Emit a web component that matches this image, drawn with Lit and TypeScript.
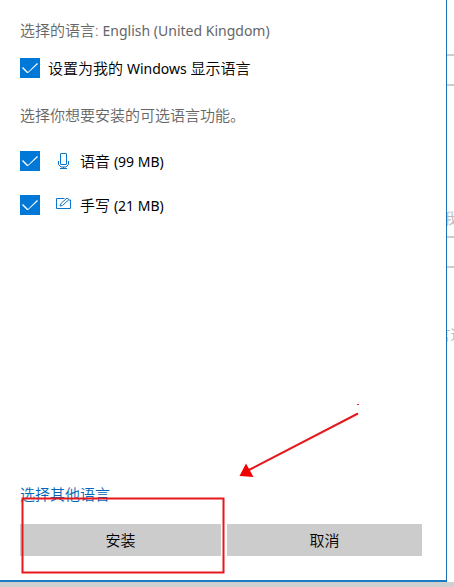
import { LitElement, html, css, svg } from "lit";
import { customElement } from "lit/decorators.js";

const micIcon = svg`
  <rect x="5.5" y="0.5" width="6" height="11" rx="0.5"></rect>
  <path d="M3.5 8v3.5l2.5 2.5h5l2.5-2.5V8M8.5 14v2M5 15.5h7"></path>`;

const penIcon = svg`
  <path d="M9.5 1.5H1.5v10h14V3h-1.5"></path>
  <path d="M5 9l1-2.5 6-5.5 2 1.5-6.5 6z"></path>`;

@customElement("check-row")
export class CheckRow extends LitElement {
  static styles = css`
    :host {
      display: block;
    }
    label {
      display: flex;
      align-items: center;
      height: 20px;
    }
    input {
      appearance: none;
      width: 20px;
      height: 20px;
      margin: 0 8px 0 0;
      background: #0078d7;
      display: grid;
      place-items: center;
    }
    input:checked::before {
      content: "";
      width: 16px;
      height: 10px;
      background: #fff;
      clip-path: polygon(0 5px, 1px 4px, 6px 9px, 15px 0, 16px 1px, 6px 10px, 5px 10px);
    }
  `;
  render() {
    return html`<label><input type="checkbox" checked /><slot></slot></label>`;
  }
}

@customElement("app-root")
export class AppRoot extends LitElement {
  static styles = css`
    :host {
      display: flex;
      flex-direction: column;
      min-height: 100vh;
      box-sizing: border-box;
      border-bottom: 5px solid #d0d0d0;
      background: #fff;
      color: #000;
      font: 350 15px/20px "Noto Sans", "Noto Sans CJK SC", sans-serif;
    }
    .page {
      flex: 1;
      display: flex;
    }
    .dialog {
      flex: 1;
      position: relative;
      display: flex;
      flex-direction: column;
      padding: 20px 24px 24px 20px;
      border-right: 1px solid #1a72b5;
      border-bottom: 2px solid #1a7cc4;
    }
    .latin {
      font-size: 14px;
      font-weight: 400;
      line-height: 1;
    }
    .note {
      margin: 0;
      color: #666;
    }
    .display {
      margin: 18px 0 27px;
    }
    .features {
      display: flex;
      flex-direction: column;
      gap: 24px;
      margin-top: 26px;
    }
    .icon {
      width: 17px;
      height: 17px;
      margin: 0 8px 0 7px;
      fill: none;
      stroke: #0a74cc;
      stroke-width: 1;
    }
    .other {
      margin-top: auto;
      align-self: flex-start;
      color: #0067b8;
      text-decoration: none;
    }
    .actions {
      display: grid;
      grid-template-columns: 201fr 195fr;
      gap: 6px;
      margin-top: 20px;
    }
    button {
      height: 32px;
      padding: 0;
      border: 0;
      background: #ccc;
      color: #000;
      font: inherit;
    }
    .markup {
      position: absolute;
      left: 0;
      bottom: 0;
      width: 400px;
      height: 190px;
      pointer-events: none;
    }
    .behind {
      flex: 0 0 7px;
      overflow: hidden;
      color: #bbb;
      white-space: nowrap;
    }
    .box {
      height: 28px;
      border: solid #ccc;
      border-width: 2px 0;
    }
    .first {
      margin: 54px 0 122px;
    }
    .second {
      margin: 8px 0 56px;
    }
    .hint {
      display: flex;
      justify-content: center;
    }
  `;
  render() {
    return html`
      <div class="page">
        <main class="dialog">
          <p class="note">选择的语言: <span class="latin">English (United Kingdom)</span></p>
          <check-row class="display"><span>设置为我的 <span class="latin">Windows</span> 显示语言</span></check-row>
          <p class="note">选择你想要安装的可选语言功能。</p>
          <div class="features">
            <check-row><svg class="icon" viewBox="0 0 17 17">${micIcon}</svg><span>语音 <span class="latin">(99 MB)</span></span></check-row>
            <check-row><svg class="icon" viewBox="0 0 17 17">${penIcon}</svg><span>手写 <span class="latin">(21 MB)</span></span></check-row>
          </div>
          <a class="other" href="#">选择其他语言</a>
          <div class="actions">
            <button type="button">安装</button>
            <button type="button">取消</button>
          </div>
          <svg class="markup" viewBox="0 390 400 190">
            <rect x="22.5" y="498.5" width="201" height="74" fill="none" stroke="#e5191d" stroke-width="2"></rect>
            <path d="M358 413.5L249 470" stroke="#e5191d" stroke-width="2"></path>
            <path d="M239.5 476L246 463.5L253.5 477z" fill="#f00000"></path>
            <path d="M357 404.5h2" stroke="#e5191d"></path>
          </svg>
        </main>
        <div class="behind">
          <div class="box first"></div>
          <div class="hint">我</div>
          <div class="box second"></div>
          <div class="hint">言这</div>
        </div>
      </div>
    `;
  }
}
